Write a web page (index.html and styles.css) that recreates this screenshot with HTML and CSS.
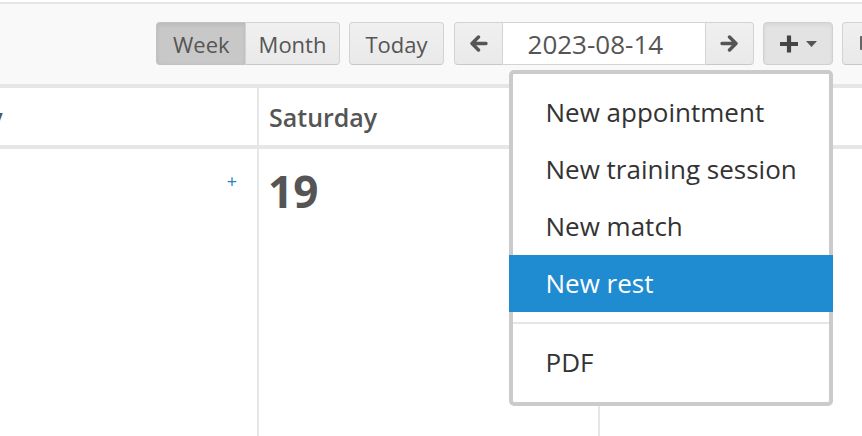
FILE: index.html
```html
<!DOCTYPE html>
<html lang="en">
<head>
<meta charset="utf-8">
<title>Calendar</title>
<link rel="stylesheet" href="styles.css">
</head>
<body>
<div class="page">
  <div class="toolbar">
    <div class="btn-group">
      <button class="btn active">Week</button>
      <button class="btn">Month</button>
    </div>
    <button class="btn">Today</button>
    <div class="date-nav">
      <button class="btn arrow prev" aria-label="Previous">
        <svg width="19" height="17" viewBox="0 0 19 17"><path d="M17 8.5H3M9.5 2L3 8.5L9.5 15" fill="none" stroke="#555" stroke-width="3.4" stroke-linecap="round" stroke-linejoin="round"/></svg>
      </button>
      <input class="date-input" type="text" value="2023-08-14">
      <button class="btn arrow next" aria-label="Next">
        <svg width="19" height="17" viewBox="0 0 19 17"><path d="M2 8.5H16M9.5 2L16 8.5L9.5 15" fill="none" stroke="#555" stroke-width="3.4" stroke-linecap="round" stroke-linejoin="round"/></svg>
      </button>
    </div>
    <div class="dropdown">
      <button class="btn add" aria-label="Add">
        <svg class="plus" width="20" height="20" viewBox="0 0 20 20"><path d="M10 1.5V18.5M1 10H19" stroke="#444" stroke-width="4.2"/></svg>
        <svg class="caret" width="11" height="6" viewBox="0 0 11 6"><path d="M0 0H11L5.5 6Z" fill="#555"/></svg>
      </button>
      <ul class="menu">
        <li class="item">New appointment</li>
        <li class="item">New training session</li>
        <li class="item">New match</li>
        <li class="item selected">New rest</li>
        <li class="divider"></li>
        <li class="item">PDF</li>
      </ul>
    </div>
    <button class="btn extra" aria-label="More">
      <svg width="20" height="16" viewBox="0 0 20 16"><rect x="2" y="0" width="16" height="14" rx="1" fill="#666"/></svg>
    </button>
  </div>

  <div class="calendar">
    <div class="cal-head">
      <div class="col">Friday</div>
      <div class="col">Saturday</div>
      <div class="col">Sunday</div>
    </div>
    <div class="cal-body">
      <div class="col day">
        <span class="num">18</span>
        <span class="add-event">+</span>
      </div>
      <div class="col day">
        <span class="num">19</span>
        <span class="add-event">+</span>
      </div>
      <div class="col day">
        <span class="num">20</span>
        <span class="add-event">+</span>
      </div>
    </div>
  </div>
</div>
</body>
</html>
```

FILE: styles.css
```css
html, body {
  margin: 0;
  padding: 0;
  overflow: hidden;
  background: #fff;
}

body {
  font-family: "Open Sans", "Liberation Sans", sans-serif;
  color: #555;
  width: 862px;
  height: 436px;
}

.page {
  width: 862px;
}

/* ---------- toolbar ---------- */
.toolbar {
  margin-top: 2px;
  border-top: 2px solid #e6e6e6;
  border-bottom: 4px solid #e6e6e6;
  background: #f9f9f9;
  display: flex;
  align-items: flex-start;
  gap: 9px;
  padding: 18px 0 19px 156px;
  white-space: nowrap;
}

.btn {
  box-sizing: border-box;
  height: 43px;
  margin: 0;
  padding: 0 15px;
  font-family: "Open Sans", "Liberation Sans", sans-serif;
  font-size: 22px;
  color: #555;
  background: linear-gradient(#f0f0f0, #e9e9e9);
  border: 1px solid #d3d3d3;
  border-bottom-color: #c8c8c8;
  border-radius: 4px;
  display: inline-flex;
  align-items: center;
  justify-content: center;
  flex-shrink: 0;
  cursor: pointer;
}

.btn-group {
  display: flex;
}

.btn-group .btn:first-child {
  border-radius: 4px 0 0 4px;
  border-right: 0;
  padding: 0 15px 0 16px;
}

.btn-group .btn:last-child {
  border-radius: 0 4px 4px 0;
  padding: 0 13px;
}

.btn.active {
  background: #c8c8c8;
  border-color: #c2c2c2;
  box-shadow: inset 0 2px 4px rgba(0, 0, 0, 0.08);
}

.date-nav {
  display: flex;
  margin-left: 1px;
}

.btn.arrow {
  width: 49px;
  padding: 0;
}

.btn.prev {
  border-radius: 4px 0 0 4px;
}

.btn.next {
  border-radius: 0 4px 4px 0;
}

.date-input {
  box-sizing: border-box;
  width: 202px;
  height: 43px;
  margin: 0;
  padding: 0 0 0 25px;
  border: 1px solid #d3d3d3;
  border-left: 0;
  border-right: 0;
  background: #fff;
  font-family: "Open Sans", "Liberation Sans", sans-serif;
  font-size: 26px;
  color: #555;
  outline: none;
}

.dropdown {
  position: relative;
  flex-shrink: 0;
}

.btn.add {
  width: 70px;
  padding: 0 0 0 1px;
  gap: 7px;
  background: #e3e3e3;
  border-color: #d0d0d0;
  box-shadow: inset 0 2px 4px rgba(0, 0, 0, 0.06);
}

.btn.add .caret {
  margin-top: 1px;
}

.btn.extra {
  width: 60px;
  justify-content: flex-start;
  padding: 0 0 0 15px;
}

/* ---------- dropdown menu ---------- */
.menu {
  position: absolute;
  top: 48px;
  right: 0;
  z-index: 10;
  box-sizing: border-box;
  width: 324px;
  margin: 0;
  padding: 10px 0 11px;
  list-style: none;
  background: #fff;
  border: 4px solid #cbcbcb;
  border-radius: 5px;
}

.menu .item {
  padding: 11px 0 11px 33px;
  font-size: 26px;
  line-height: 35px;
  color: #333;
}

.menu .item.selected {
  margin: 0 -4px;
  padding-left: 37px;
  background: #1f8bd0;
  color: #fff;
}

.menu .divider {
  height: 2px;
  margin: 10px 0 10px;
  background: #e5e5e5;
}

/* ---------- calendar ---------- */
.calendar {
  margin-left: -84px;
}

.cal-head,
.cal-body {
  display: flex;
}

.cal-head {
  height: 57px;
  border-bottom: 4px solid #e6e6e6;
}

.col {
  box-sizing: border-box;
  width: 341px;
  flex-shrink: 0;
  border-left: 2px solid #e6e6e6;
}

.cal-head .col {
  display: flex;
  align-items: center;
  padding-left: 10px;
  font-size: 25px;
  font-weight: 600;
  color: #555;
}

.cal-body .day {
  height: 300px;
  display: flex;
  justify-content: space-between;
  align-items: flex-start;
  padding: 12px 20px 0 9px;
}

.day .num {
  font-size: 44px;
  font-weight: 700;
  color: #555;
  line-height: 60px;
}

.day .add-event {
  font-size: 18px;
  line-height: 24px;
  color: #2a7fba;
  margin-top: 8px;
}
```
